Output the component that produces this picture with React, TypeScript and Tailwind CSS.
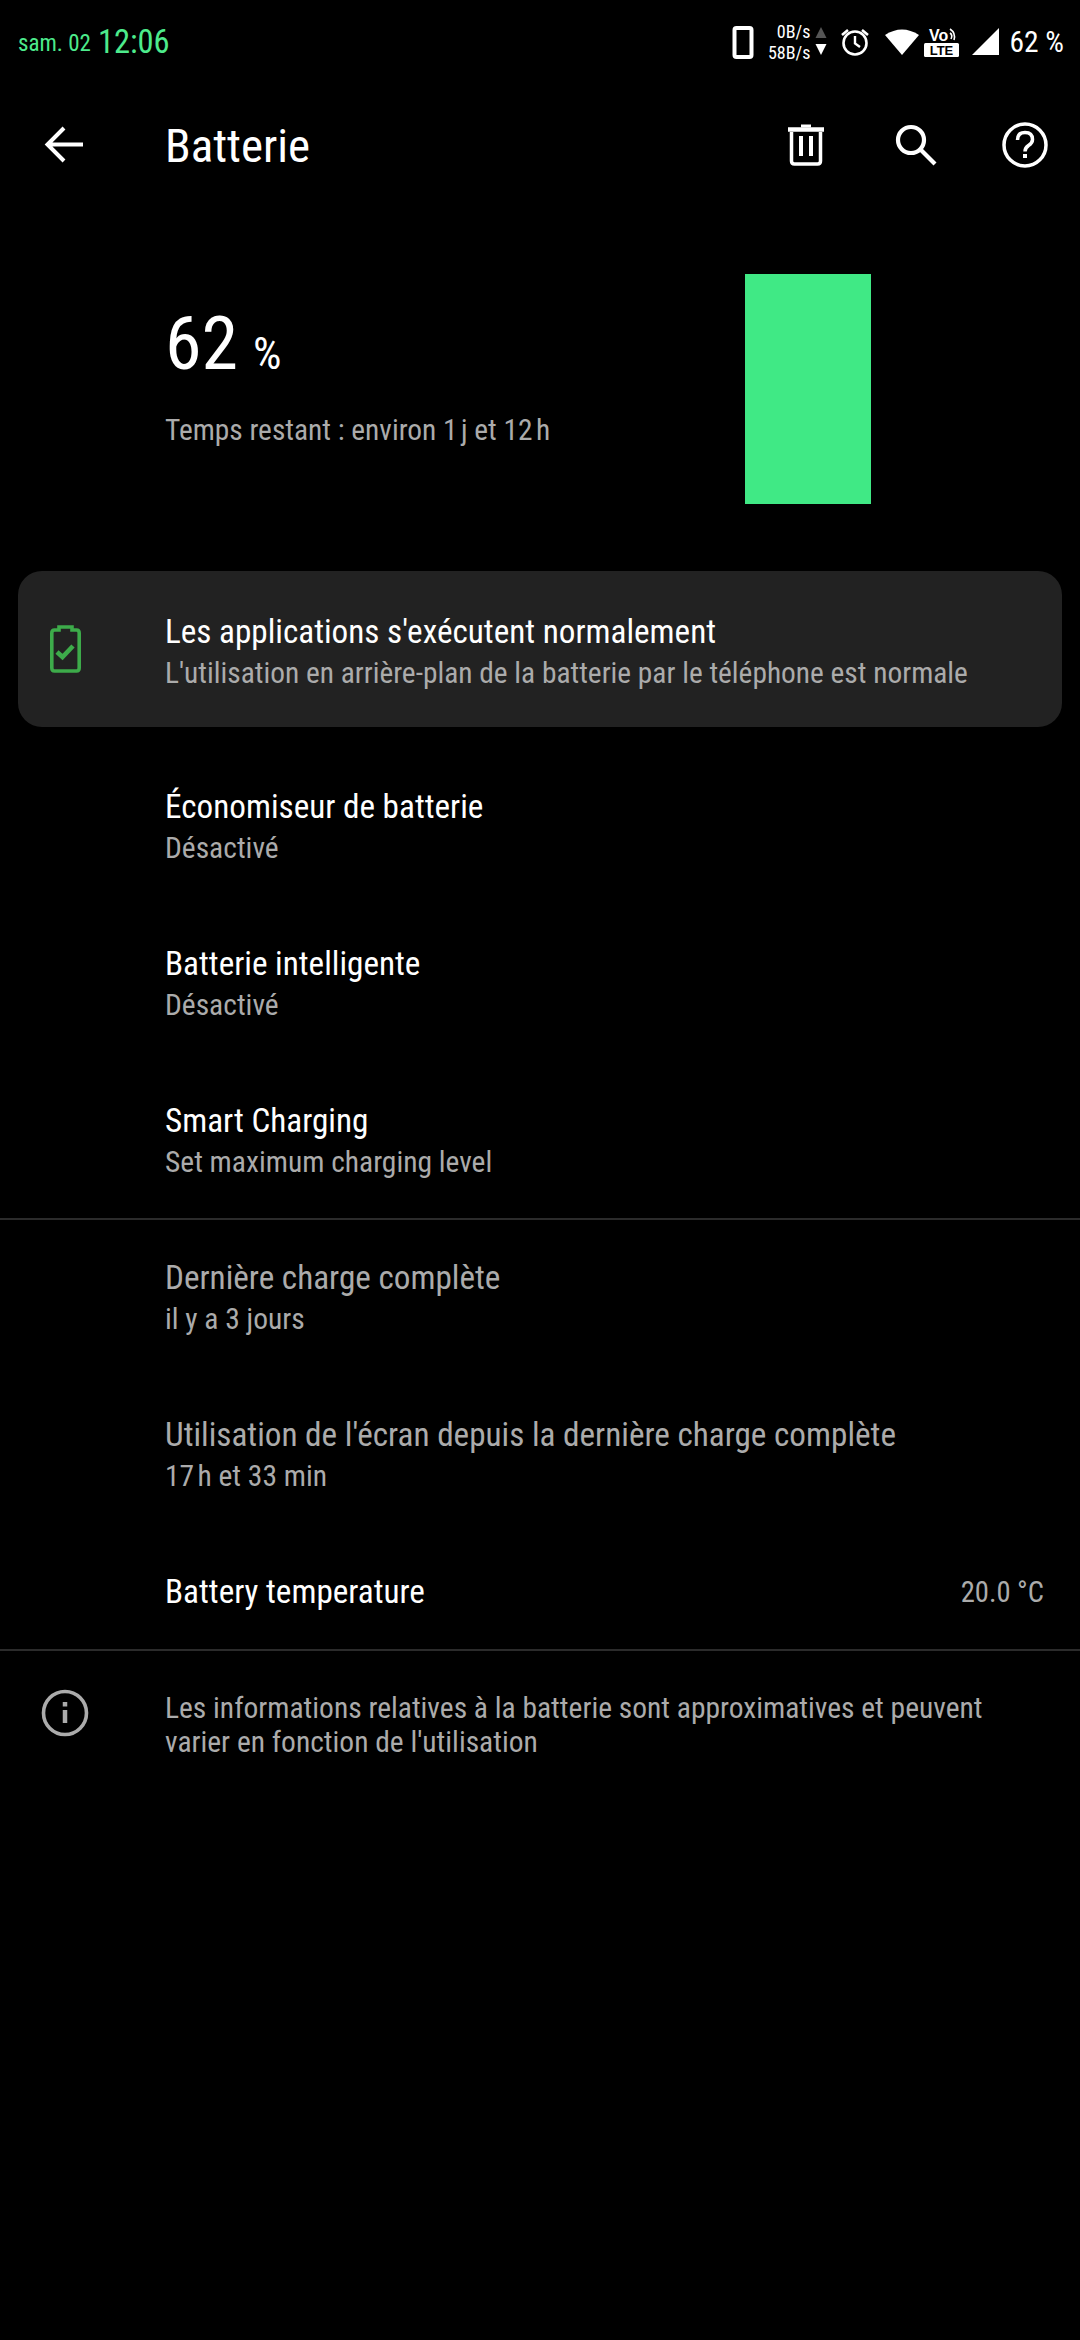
import React from "react";

function Row({ title, sub, dim }: { title: string; sub: string; dim?: boolean }) {
  return (
    <div className="h-[157px] pl-[165px] pr-4 flex flex-col justify-center">
      <div className={`text-[33.2px] leading-[44px] ${dim ? "text-[#ababab]" : "text-white"}`}>{title}</div>
      <div className="text-[29.5px] leading-[38px] text-[#ababab]">{sub}</div>
    </div>
  );
}

export default function App() {
  return (
    <div className="w-[1080px] h-[2340px] bg-black text-white overflow-hidden font-['Roboto_Condensed',Roboto,'Liberation_Sans',sans-serif] [font-stretch:75%]">
      {/* status bar */}
      <div className="h-[84px] flex items-center pl-[18px] pr-[16px]">
        <span className="text-[23px] text-[#4deb8c] mr-[7px] mt-[4px]">sam. 02</span>
        <span className="text-[32.5px] text-[#4deb8c]">12:06</span>
        <div className="ml-auto flex items-center">
          <svg width="22" height="33" viewBox="0 0 22 33" className="mr-[14px]"><rect x="2.5" y="2" width="17" height="29" rx="2" fill="none" stroke="white" strokeWidth="4" /></svg>
          <div className="flex flex-col items-end text-[18px] leading-[21px] mr-[4px]"><span>0B/s</span><span>58B/s</span></div>
          <svg width="14" height="36" viewBox="0 0 14 36" className="mr-[12px]">
            <path d="M7 3 L12.5 14 H1.5 Z" fill="#555" />
            <path d="M1.5 20 H12.5 L7 31 Z" fill="white" />
          </svg>
          <svg width="30" height="30" viewBox="0 0 30 30" className="mr-[15px]" fill="none" stroke="white">
            <circle cx="15" cy="16" r="11.5" strokeWidth="2.6" />
            <path d="M15 9 V16.5 L20 20" strokeWidth="2.4" />
            <path d="M2 8 L8 3 M28 8 L22 3" strokeWidth="2.6" />
          </svg>
          <svg width="34" height="28" viewBox="0 0 34 28" className="mr-[5px]"><path d="M0 7 Q17 -4 34 7 L17 27 Z" fill="white" /></svg>
          <svg width="36" height="30" viewBox="0 0 36 30" className="mr-[12px]">
            <rect x="0" y="16" width="35" height="14" rx="1.5" fill="white" />
            <text x="17.5" y="28" fontSize="13" fontWeight="700" textAnchor="middle" fill="black" className="font-['Liberation_Sans',sans-serif]">LTE</text>
            <text x="5" y="14" fontSize="16" fontWeight="700" fill="white" className="font-['Liberation_Sans',sans-serif]">Vo</text>
            <path d="M26 2 Q32 6 30 13 M26 6 Q29 8 27 12" stroke="white" strokeWidth="1.6" fill="none" />
          </svg>
          <svg width="28" height="28" viewBox="0 0 28 28" className="mr-[9px]"><path d="M0 27 L27 0 V27 Z" fill="white" /></svg>
          <span className="text-[29.5px]">62 %</span>
        </div>
      </div>

      {/* app bar */}
      <div className="h-[122px] flex items-center">
        <div className="w-[165px] pl-[44px]">
          <svg width="40" height="40" viewBox="0 0 40 40" fill="none" stroke="white" strokeWidth="4"><path d="M39 19.5 H4 M20 3 L3.5 19.5 L20 36" /></svg>
        </div>
        <div className="text-[47px] mt-[2px]">Batterie</div>
        <div className="ml-auto flex items-center pr-[32px]">
          <svg width="38" height="42" viewBox="0 0 38 42" fill="none" className="mr-[70px]">
            <path d="M1 5.5 H37" stroke="white" strokeWidth="4.5" />
            <path d="M14 2 H24" stroke="white" strokeWidth="3" />
            <path d="M4.5 8 V37 Q4.5 40 7.5 40 H30.5 Q33.5 40 33.5 37 V8" stroke="white" strokeWidth="3.5" />
            <path d="M14 12 V32 M24 12 V32" stroke="white" strokeWidth="4" />
          </svg>
          <svg width="42" height="42" viewBox="0 0 42 42" fill="none" stroke="white" strokeWidth="4.2" className="mr-[65px]">
            <circle cx="16" cy="16" r="13" />
            <path d="M25.5 25.5 L40 40" />
          </svg>
          <svg width="46" height="46" viewBox="0 0 46 46" fill="none" stroke="white">
            <circle cx="23" cy="23" r="21" strokeWidth="3.5" />
            <path d="M15.5 18 Q15.5 10.5 23 10.5 Q30.5 10.5 30.5 17.5 Q30.5 21 26.5 23.5 Q23 26 23 29.5" strokeWidth="3.5" />
            <path d="M23 32 V36" strokeWidth="4" />
          </svg>
        </div>
      </div>

      {/* hero */}
      <div className="h-[230px] mt-[68px] flex">
        <div className="w-[745px] pl-[165px] pt-[26px]">
          <div className="flex items-baseline leading-none">
            <span className="text-[74px] leading-[88px]">62</span>
            <span className="text-[45px] ml-[15px]">%</span>
          </div>
          <div className="text-[29.4px] text-[#ababab] mt-[20px]">Temps restant : environ 1{"\u202f"}j et 12{"\u202f"}h</div>
        </div>
        <div className="w-[126px] h-full bg-[#40e985]" />
      </div>

      {/* card */}
      <div className="mt-[67px] mx-[18px] h-[156px] rounded-[24px] bg-[#222222] flex items-center">
        <div className="w-[147px] pl-[32px]">
          <svg width="31" height="48" viewBox="0 0 31 48" fill="none">
            <path d="M9 5 V2 H22 V5 H26.5 Q29.2 5 29.2 8 V43 Q29.2 46 26.5 46 H4.5 Q1.8 46 1.8 43 V8 Q1.8 5 4.5 5 Z" stroke="#3dab4a" strokeWidth="3.6" />
            <path d="M7 27 L12.5 32 L23 21" stroke="#3dab4a" strokeWidth="4.6" />
          </svg>
        </div>
        <div className="pt-[5px]">
          <div className="text-[33.2px] leading-[42px] text-white">Les applications s'exécutent normalement</div>
          <div className="text-[29.4px] leading-[40px] text-[#ababab]">L'utilisation en arrière-plan de la batterie par le téléphone est normale</div>
        </div>
      </div>

      <div className="mt-[20px]">
        <Row title="Économiseur de batterie" sub="Désactivé" />
        <Row title="Batterie intelligente" sub="Désactivé" />
        <Row title="Smart Charging" sub="Set maximum charging level" />
      </div>
      <div className="h-[2px] bg-[#2b2b2b]" />
      <div className="-mt-[2px]">
        <Row dim title="Dernière charge complète" sub="il y a 3 jours" />
        <Row dim title="Utilisation de l'écran depuis la dernière charge complète" sub={"17\u202fh et 33 min"} />
      </div>
      <div className="h-[117px] pl-[165px] pr-[36px] pt-[38px] flex items-start justify-between">
        <span className="text-[33.2px] leading-[44px]">Battery temperature</span>
        <span className="text-[28.6px] leading-[44px] text-[#ababab]">20.0 °C</span>
      </div>
      <div className="h-[2px] bg-[#2b2b2b]" />

      <div className="flex pt-[40px]">
        <div className="w-[165px] pl-[41px] -mt-[2px]">
          <svg width="48" height="48" viewBox="0 0 48 48" fill="none" stroke="#ababab">
            <circle cx="24" cy="24" r="21.5" strokeWidth="3.6" />
            <path d="M24 21 V34" strokeWidth="4.5" />
            <path d="M24 13 V17.5" strokeWidth="4.5" />
          </svg>
        </div>
        <div className="text-[29.5px] leading-[34px] text-[#ababab]">
          Les informations relatives à la batterie sont approximatives et peuvent<br />varier en fonction de l'utilisation
        </div>
      </div>
    </div>
  );
}
